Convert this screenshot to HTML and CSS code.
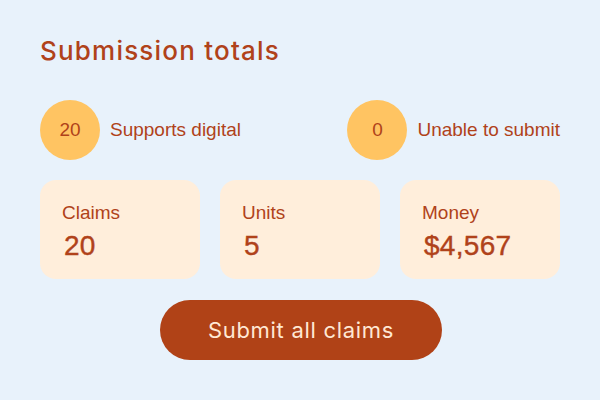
FILE: index.html
```html
<!DOCTYPE html>
<html>
<head>
<meta charset="utf-8">
<link rel="stylesheet" href="styles.css">
</head>
<body>
<main class="panel">
  <h1 class="title">Submission totals</h1>
  <div class="stats">
    <div class="stat"><span class="badge">20</span><span class="stat-label">Supports digital</span></div>
    <div class="stat"><span class="badge">0</span><span class="stat-label">Unable to submit</span></div>
  </div>
  <div class="cards">
    <div class="card"><div class="card-label">Claims</div><div class="card-value">20</div></div>
    <div class="card"><div class="card-label">Units</div><div class="card-value">5</div></div>
    <div class="card"><div class="card-label">Money</div><div class="card-value">$4,567</div></div>
  </div>
  <div class="actions">
    <button class="submit">Submit all claims</button>
  </div>
</main>
</body>
</html>
```

FILE: styles.css
```css
html, body {
  margin: 0;
  padding: 0;
  background: #e8f2fb;
}
body {
  width: 600px;
  height: 400px;
  font-family: "Liberation Sans", Arial, sans-serif;
  color: #b0421a;
}
.panel {
  padding: 34px 40px 0 40px;
}
.title {
  margin: 0;
  font-family: Inter, "Liberation Sans", sans-serif;
  font-weight: 500;
  font-size: 26px;
  line-height: 34px;
  letter-spacing: 1.2px;
  color: #b0421a;
}
.stats {
  display: flex;
  justify-content: space-between;
  margin-top: 32px;
}
.stat {
  display: flex;
  align-items: center;
  gap: 10px;
}
.badge {
  width: 60px;
  height: 60px;
  border-radius: 50%;
  background: #ffc462;
  display: flex;
  align-items: center;
  justify-content: center;
  font-size: 19px;
}
.stat-label {
  font-size: 19px;
}
.cards {
  display: grid;
  grid-template-columns: repeat(3, 1fr);
  gap: 20px;
  margin-top: 20px;
}
.card {
  background: #ffeedb;
  border-radius: 16px;
  height: 99px;
  box-sizing: border-box;
  padding: 21px 22px 0 22px;
}
.card-label {
  font-size: 19px;
  line-height: 24px;
}
.card-value {
  font-size: 28px;
  line-height: 32px;
  margin-top: 5px;
  padding-left: 2px;
  letter-spacing: 0.3px;
  -webkit-text-stroke: 0.4px #b0421a;
}
.actions {
  display: flex;
  justify-content: center;
  margin-top: 21px;
  padding-left: 2px;
}
.submit {
  width: 282px;
  height: 60px;
  border: none;
  border-radius: 30px;
  background: #b04217;
  color: #ffe8d4;
  font-family: Inter, "Liberation Sans", sans-serif;
  font-size: 22px;
  letter-spacing: 0.7px;
}
```
